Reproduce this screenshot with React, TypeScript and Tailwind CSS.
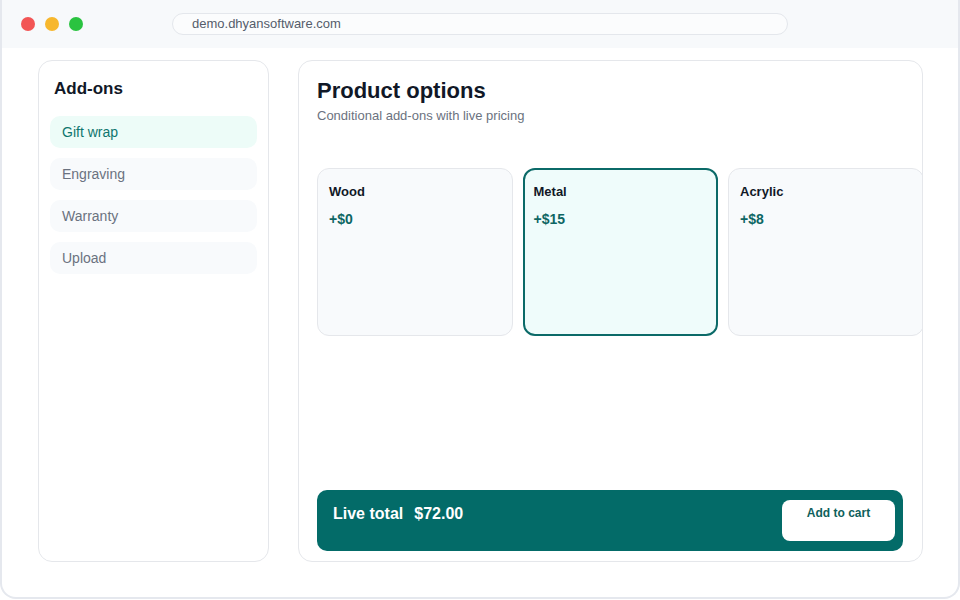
import { useState } from 'react';

const addOns = ['Gift wrap', 'Engraving', 'Warranty', 'Upload'];

const materials = [
  { name: 'Wood', price: 0 },
  { name: 'Metal', price: 15 },
  { name: 'Acrylic', price: 8 },
];

export default function App() {
  const [activeAddOn, setActiveAddOn] = useState('Gift wrap');
  const [material, setMaterial] = useState('Metal');

  return (
    <div className="w-[960px] h-[600px] bg-white font-['Liberation_Sans',Arial,sans-serif] overflow-hidden">
      <div className="h-[599px] flex flex-col border-x-2 border-b-2 border-[#e5e8ee] rounded-b-[16px] overflow-hidden bg-white">
        {/* Browser chrome */}
        <div className="h-[48px] shrink-0 bg-[#f7f9fb] flex items-center pl-[19px]">
          <div className="flex gap-[10px]">
            <span className="w-[14px] h-[14px] rounded-full bg-[#f25555]" />
            <span className="w-[14px] h-[14px] rounded-full bg-[#f7b72d]" />
            <span className="w-[14px] h-[14px] rounded-full bg-[#2ac340]" />
          </div>
          <div className="ml-[89px] w-[616px] h-[22px] rounded-full border border-[#e4e7ec] bg-[#fbfcfd] flex items-center pl-[19px] text-[13px] text-[#555d6b]">
            demo.dhyansoftware.com
          </div>
        </div>

        {/* Page */}
        <div className="flex gap-[29px] pl-[36px] pt-[12px]">
          {/* Sidebar */}
          <div className="w-[231px] h-[502px] rounded-[14px] border border-[#e5e7eb] bg-white px-[11px] pt-[16px]">
            <h2 className="ml-[4px] text-[17px] leading-[24px] font-bold text-[#111827]">Add-ons</h2>
            <div className="mt-[15px] flex flex-col gap-[10px]">
              {addOns.map((item) => (
                <button
                  key={item}
                  onClick={() => setActiveAddOn(item)}
                  className={`h-[32px] rounded-[10px] px-[12px] text-left text-[14px] ${
                    activeAddOn === item ? 'bg-[#edfcf8] text-[#0f766e]' : 'bg-[#f8fafc] text-[#6b7280]'
                  }`}
                >
                  {item}
                </button>
              ))}
            </div>
          </div>

          {/* Main panel */}
          <div className="w-[625px] h-[502px] rounded-[14px] border border-[#e5e7eb] bg-white overflow-hidden flex flex-col pl-[18px] pr-[18px] pt-[17px] pb-[10px]">
            <h1 className="text-[22px] leading-[26px] font-bold text-[#111827]">Product options</h1>
            <p className="mt-[3px] text-[13px] leading-[18px] text-[#6b7280]">Conditional add-ons with live pricing</p>

            <div className="mt-[43px] flex gap-[10px]">
              {materials.map((m) => {
                const selected = material === m.name;
                return (
                  <button
                    key={m.name}
                    onClick={() => setMaterial(m.name)}
                    className={`w-[195.5px] h-[168px] shrink-0 rounded-[12px] text-left flex flex-col ${
                      selected
                        ? 'border-2 border-[#0b6a68] bg-[#effcfb] px-[9px] pt-[11px]'
                        : 'border border-[#e5e7eb] bg-[#f8fafc] px-[11px] pt-[12px]'
                    }`}
                  >
                    <span className="text-[13px] leading-[22px] font-bold text-[#111827]">{m.name}</span>
                    <span className="mt-[6px] text-[14px] leading-[20px] font-bold text-[#0d6663]">+${m.price}</span>
                  </button>
                );
              })}
            </div>

            <div className="mt-auto mr-[1px] h-[61px] rounded-[10px] bg-[#036b68] flex items-start justify-between pl-[16px] pr-[8px] pt-[10px]">
              <div className="mt-[2px] flex gap-[11px] text-[16px] leading-[24px] font-bold text-white">
                <span>Live total</span>
                <span>$72.00</span>
              </div>
              <button className="w-[113px] h-[41px] rounded-[8px] bg-white flex flex-col items-center justify-start pt-[5px] text-[12px] leading-[16px] font-bold text-[#0f5f5c]">
                Add to cart
              </button>
            </div>
          </div>
        </div>
      </div>
    </div>
  );
}
